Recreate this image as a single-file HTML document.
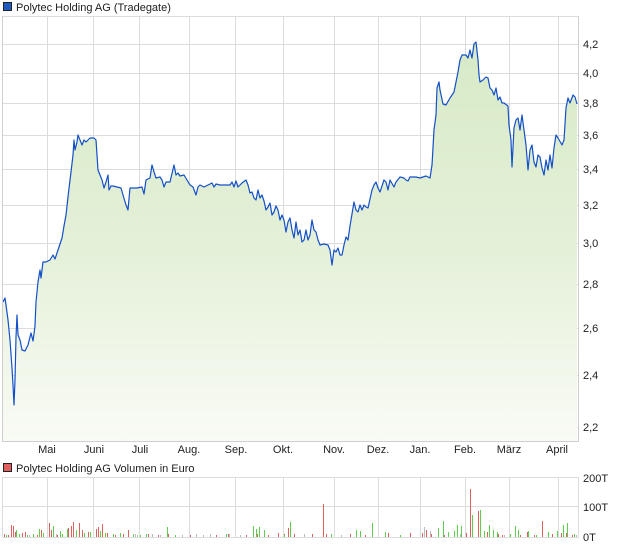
<!DOCTYPE html>
<html><head><meta charset="utf-8"><style>
html,body{margin:0;padding:0;background:#fff;}
svg{display:block;font-family:"Liberation Sans",Arial,sans-serif;}
</style></head><body>
<svg width="620" height="546" viewBox="0 0 620 546" xmlns="http://www.w3.org/2000/svg">
<defs>
<linearGradient id="g" x1="0" y1="0" x2="0" y2="1">
<stop offset="0" stop-color="#d7eac6"/>
<stop offset="0.5" stop-color="#e4f0d8"/>
<stop offset="1" stop-color="#f9fbf5"/>
</linearGradient>
</defs>
<!-- legend -->
<rect x="3.5" y="2.5" width="8" height="8" fill="#1f5cc0" stroke="#222"/>
<text x="16" y="11" font-size="11" fill="#222">Polytec Holding AG (Tradegate)</text>
<!-- grid -->
<g stroke="#dcdcdc" stroke-width="1" fill="none">
<path d="M47.5 16V441M93.5 16V441M139.5 16V441M189.5 16V441M235.5 16V441M283.5 16V441M334.5 16V441M378.5 16V441M420.5 16V441M465.5 16V441M509.5 16V441M558.5 16V441"/>
<path d="M2 16.5H578M2 44.5H578M2 73.5H578M2 103.5H578M2 135.5H578M2 169.5H578M2 205.5H578M2 243.5H578M2 284.5H578M2 328.5H578M2 375.5H578M2 427.5H578"/>
</g>
<path id="p" fill="url(#g)" d="M3 441 L3 302 L5 298 L6 305 L8 320 L10 340 L12 368 L13 385 L14 405 L15 380 L16 337 L17 315 L18 335 L20 340 L22 350 L25 351 L28 345 L31 333 L33 341 L35 326 L36 302 L38 282 L40 270 L41 278 L43 262 L46 262 L50 260 L53 255 L55 259 L58 250 L62 238 L64 226 L66 215 L68 197 L70 180 L71 172 L73 155 L74 140 L75 150 L77 142 L78 135 L80 140 L82 145 L84 140 L86 142 L90 138 L94 138 L96 140 L98 170 L100 175 L102 180 L104 188 L106 182 L108 175 L109 190 L111 186 L113 186 L117 187 L121 188 L123 195 L126 205 L128 210 L130 188 L137 188 L142 187 L144 194 L146 180 L150 178 L152 165 L154 172 L156 178 L160 177 L162 180 L164 187 L166 182 L170 182 L174 165 L176 175 L178 173 L180 176 L184 175 L187 180 L190 185 L193 187 L196 195 L198 187 L200 185 L204 187 L208 185 L212 183 L214 187 L216 184 L220 185 L224 185 L230 185 L232 182 L234 187 L236 181 L238 187 L242 183 L246 180 L248 185 L250 193 L252 192 L254 198 L256 200 L258 190 L260 198 L262 195 L264 201 L266 210 L268 207 L270 203 L272 215 L274 212 L276 206 L278 210 L280 220 L282 215 L284 220 L286 232 L288 222 L290 218 L292 230 L294 238 L296 222 L298 235 L300 230 L302 242 L304 240 L306 230 L308 240 L310 235 L312 220 L314 230 L316 232 L318 240 L320 245 L324 244 L328 245 L330 250 L332 265 L334 250 L336 252 L338 248 L340 255 L342 255 L344 245 L346 237 L348 240 L350 226 L354 202 L356 210 L358 212 L360 205 L362 210 L364 205 L366 207 L368 208 L372 190 L374 185 L376 182 L378 188 L380 192 L384 180 L386 182 L388 190 L390 180 L394 187 L396 182 L400 177 L404 178 L406 180 L408 181 L410 177 L416 177 L420 178 L426 176 L430 178 L432 165 L434 130 L436 115 L437 88 L439 82 L440 90 L443 104 L446 105 L450 98 L454 92 L456 82 L458 72 L460 60 L462 55 L466 55 L468 58 L470 50 L472 58 L474 44 L476 42 L478 60 L479 75 L480 82 L483 80 L486 77 L488 78 L490 88 L492 90 L494 95 L496 88 L498 100 L500 97 L502 103 L504 103 L508 106 L509 125 L511 140 L512 167 L514 128 L516 120 L518 118 L520 130 L522 115 L524 130 L526 145 L528 170 L530 150 L532 145 L534 162 L536 167 L538 155 L540 157 L542 168 L544 175 L546 160 L548 170 L550 155 L552 168 L554 148 L556 135 L558 138 L562 145 L564 140 L566 108 L568 98 L570 103 L573 95 L575 97 L577 104 L577 441 Z"/>
<path fill="none" stroke="#1450c8" stroke-width="1.2" stroke-linejoin="round" d="M3 302 L5 298 L6 305 L8 320 L10 340 L12 368 L13 385 L14 405 L15 380 L16 337 L17 315 L18 335 L20 340 L22 350 L25 351 L28 345 L31 333 L33 341 L35 326 L36 302 L38 282 L40 270 L41 278 L43 262 L46 262 L50 260 L53 255 L55 259 L58 250 L62 238 L64 226 L66 215 L68 197 L70 180 L71 172 L73 155 L74 140 L75 150 L77 142 L78 135 L80 140 L82 145 L84 140 L86 142 L90 138 L94 138 L96 140 L98 170 L100 175 L102 180 L104 188 L106 182 L108 175 L109 190 L111 186 L113 186 L117 187 L121 188 L123 195 L126 205 L128 210 L130 188 L137 188 L142 187 L144 194 L146 180 L150 178 L152 165 L154 172 L156 178 L160 177 L162 180 L164 187 L166 182 L170 182 L174 165 L176 175 L178 173 L180 176 L184 175 L187 180 L190 185 L193 187 L196 195 L198 187 L200 185 L204 187 L208 185 L212 183 L214 187 L216 184 L220 185 L224 185 L230 185 L232 182 L234 187 L236 181 L238 187 L242 183 L246 180 L248 185 L250 193 L252 192 L254 198 L256 200 L258 190 L260 198 L262 195 L264 201 L266 210 L268 207 L270 203 L272 215 L274 212 L276 206 L278 210 L280 220 L282 215 L284 220 L286 232 L288 222 L290 218 L292 230 L294 238 L296 222 L298 235 L300 230 L302 242 L304 240 L306 230 L308 240 L310 235 L312 220 L314 230 L316 232 L318 240 L320 245 L324 244 L328 245 L330 250 L332 265 L334 250 L336 252 L338 248 L340 255 L342 255 L344 245 L346 237 L348 240 L350 226 L354 202 L356 210 L358 212 L360 205 L362 210 L364 205 L366 207 L368 208 L372 190 L374 185 L376 182 L378 188 L380 192 L384 180 L386 182 L388 190 L390 180 L394 187 L396 182 L400 177 L404 178 L406 180 L408 181 L410 177 L416 177 L420 178 L426 176 L430 178 L432 165 L434 130 L436 115 L437 88 L439 82 L440 90 L443 104 L446 105 L450 98 L454 92 L456 82 L458 72 L460 60 L462 55 L466 55 L468 58 L470 50 L472 58 L474 44 L476 42 L478 60 L479 75 L480 82 L483 80 L486 77 L488 78 L490 88 L492 90 L494 95 L496 88 L498 100 L500 97 L502 103 L504 103 L508 106 L509 125 L511 140 L512 167 L514 128 L516 120 L518 118 L520 130 L522 115 L524 130 L526 145 L528 170 L530 150 L532 145 L534 162 L536 167 L538 155 L540 157 L542 168 L544 175 L546 160 L548 170 L550 155 L552 168 L554 148 L556 135 L558 138 L562 145 L564 140 L566 108 L568 98 L570 103 L573 95 L575 97 L577 104"/>
<!-- frame -->
<path d="M2.5 16V441.5H578.5V16" fill="none" stroke="#cfcfcf"/>
<!-- y labels -->
<g font-size="11" fill="#222">
<text x="583" y="48">4,2</text><text x="583" y="77">4,0</text><text x="583" y="107">3,8</text><text x="583" y="139">3,6</text><text x="583" y="173">3,4</text><text x="583" y="209">3,2</text><text x="583" y="247">3,0</text><text x="583" y="288">2,8</text><text x="583" y="332">2,6</text><text x="583" y="379">2,4</text><text x="583" y="431">2,2</text>
</g>
<g font-size="11" fill="#222" text-anchor="middle">
<text x="47" y="453">Mai</text><text x="94" y="453">Juni</text><text x="140" y="453">Juli</text><text x="189" y="453">Aug.</text><text x="236" y="453">Sep.</text><text x="283" y="453">Okt.</text><text x="334" y="453">Nov.</text><text x="378" y="453">Dez.</text><text x="420" y="453">Jan.</text><text x="465" y="453">Feb.</text><text x="509" y="453">März</text><text x="557" y="453">April</text>
</g>
<!-- volume -->
<rect x="3.5" y="463.5" width="8" height="8" fill="#e06060" stroke="#222"/>
<text x="16" y="472" font-size="11" fill="#222">Polytec Holding AG Volumen in Euro</text>
<g stroke="#dcdcdc" fill="none">
<path d="M47.5 477V537M93.5 477V537M139.5 477V537M189.5 477V537M235.5 477V537M283.5 477V537M334.5 477V537M378.5 477V537M420.5 477V537M465.5 477V537M509.5 477V537M558.5 477V537"/>
<path d="M2 477.5H578M2 506.5H578"/>
<path d="M2.5 477V537.5H578.5V477"/>
</g>
<path stroke="#e06060" stroke-width="1" fill="none" d="M4.5 537v-3M8.5 537v-2M11.5 537v-12M13.5 537v-11M15.5 537v-5M22.5 537v-4M25.5 537v-5M37.5 537v-2M41.5 537v-7M49.5 537v-14M51.5 537v-7M57.5 537v-2M68.5 537v-9M71.5 537v-11M73.5 537v-15M79.5 537v-14M82.5 537v-7M88.5 537v-5M96.5 537v-8M98.5 537v-10M102.5 537v-13M107.5 537v-4M115.5 537v-2M123.5 537v-3M128.5 537v-7M148.5 537v-3M158.5 537v-2M168.5 537v-3M190.5 537v-2M216.5 537v-2M228.5 537v-3M246.5 537v-2M257.5 537v-3M268.5 537v-2M278.5 537v-4M284.5 537v-3M288.5 537v-9M294.5 537v-3M312.5 537v-3M323.5 537v-33M326.5 537v-3M350.5 537v-3M365.5 537v-2M388.5 537v-4M410.5 537v-4M422.5 537v-4M426.5 537v-7M431.5 537v-3M444.5 537v-2M466.5 537v-4M470.5 537v-48M478.5 537v-26M487.5 537v-5M498.5 537v-3M502.5 537v-2M520.5 537v-2M527.5 537v-5M534.5 537v-2M542.5 537v-16M552.5 537v-3M561.5 537v-4M566.5 537v-4M572.5 537v-2"/>
<path stroke="#5cd04c" stroke-width="1" fill="none" d="M6.5 537v-2M16.5 537v-7M19.5 537v-3M27.5 537v-2M33.5 537v-3M39.5 537v-8M43.5 537v-4M53.5 537v-11M60.5 537v-6M62.5 537v-3M67.5 537v-8M76.5 537v-7M84.5 537v-4M90.5 537v-5M100.5 537v-6M105.5 537v-4M113.5 537v-3M120.5 537v-4M133.5 537v-3M140.5 537v-2M146.5 537v-3M167.5 537v-10M175.5 537v-2M226.5 537v-3M253.5 537v-11M256.5 537v-8M259.5 537v-10M264.5 537v-7M284.5 537v-2M290.5 537v-15M331.5 537v-3M356.5 537v-7M360.5 537v-6M372.5 537v-14M385.5 537v-5M400.5 537v-2M438.5 537v-9M443.5 537v-16M448.5 537v-5M454.5 537v-6M457.5 537v-12M461.5 537v-11M472.5 537v-22M480.5 537v-27M484.5 537v-6M489.5 537v-12M493.5 537v-7M497.5 537v-5M510.5 537v-3M515.5 537v-11M518.5 537v-7M528.5 537v-6M536.5 537v-2M548.5 537v-5M557.5 537v-6M563.5 537v-12M567.5 537v-14M574.5 537v-3"/>
<path stroke="#bbbbbb" stroke-width="1" fill="none" d="M29.5 537v-2M56.5 537v-3M135.5 537v-3M137.5 537v-2M152.5 537v-3M160.5 537v-2M182.5 537v-2M196.5 537v-3M203.5 537v-2M210.5 537v-3M229.5 537v-3M240.5 537v-2M304.5 537v-3M341.5 537v-2M424.5 537v-10M430.5 537v-6M460.5 537v-3M504.5 537v-2M576.5 537v-2"/>
<g font-size="11" fill="#222">
<text x="583" y="482">200T</text><text x="583" y="511">100T</text><text x="583" y="541">0T</text>
</g>
</svg>
</body></html>
